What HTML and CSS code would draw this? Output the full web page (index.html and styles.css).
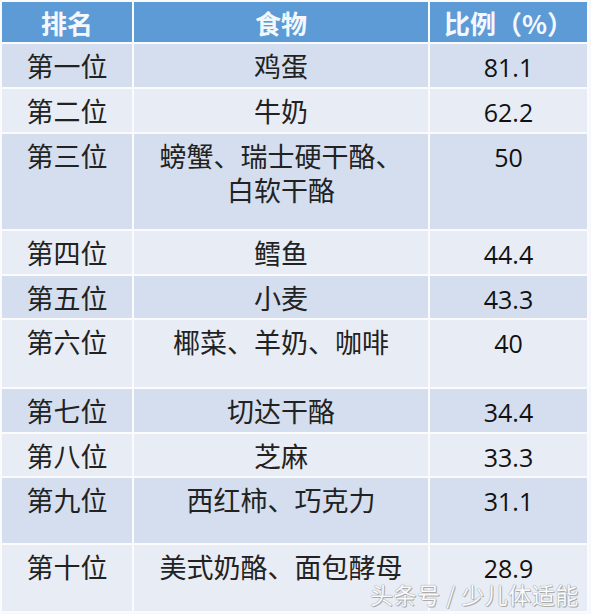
FILE: index.html
```
<!DOCTYPE html>
<html lang="zh-CN">
<head>
<meta charset="utf-8">
<title>食物排名</title>
<link rel="stylesheet" href="styles.css">
</head>
<body>
<div class="page">
  <div class="table">
    <div class="cell hd">排名</div>
    <div class="cell hd">食物</div>
    <div class="cell hd">比例（%）</div>

    <div class="cell dark rank">第一位</div>
    <div class="cell dark food">鸡蛋</div>
    <div class="cell dark num">81.1</div>

    <div class="cell light rank">第二位</div>
    <div class="cell light food">牛奶</div>
    <div class="cell light num">62.2</div>

    <div class="cell dark rank">第三位</div>
    <div class="cell dark food">螃蟹、瑞士硬干酪、<br>白软干酪</div>
    <div class="cell dark num">50</div>

    <div class="cell light rank">第四位</div>
    <div class="cell light food">鳕鱼</div>
    <div class="cell light num">44.4</div>

    <div class="cell dark rank">第五位</div>
    <div class="cell dark food">小麦</div>
    <div class="cell dark num">43.3</div>

    <div class="cell light rank">第六位</div>
    <div class="cell light food">椰菜、羊奶、咖啡</div>
    <div class="cell light num">40</div>

    <div class="cell dark rank">第七位</div>
    <div class="cell dark food">切达干酪</div>
    <div class="cell dark num">34.4</div>

    <div class="cell light rank">第八位</div>
    <div class="cell light food">芝麻</div>
    <div class="cell light num">33.3</div>

    <div class="cell dark rank">第九位</div>
    <div class="cell dark food">西红柿、巧克力</div>
    <div class="cell dark num">31.1</div>

    <div class="cell light rank">第十位</div>
    <div class="cell light food">美式奶酪、面包酵母</div>
    <div class="cell light num">28.9</div>
  </div>
  <div class="watermark">头条号 / 少儿体适能</div>
</div>
</body>
</html>
```
FILE: styles.css
```
html, body {
  margin: 0;
  padding: 0;
  background: #ffffff;
}

.page {
  position: relative;
  width: 591px;
  height: 614px;
  overflow: hidden;
  background: #f7f8fb;
}

.table {
  display: grid;
  grid-template-columns: 130px 294px 157px;
  grid-template-rows: 40px 43px 43px 95px 43px 42px 67px 43px 42px 65px 66px;
  gap: 2px;
  padding: 2px;
  background: #fbfbfd;
  width: 585px;
}

.cell {
  text-align: center;
  font-family: "Noto Sans CJK SC", sans-serif;
  color: #1c1c1c;
  font-size: 26px;
  line-height: 34px;
  padding-top: 5px;
  box-sizing: border-box;
}

.hd {
  background: #5d9bd7;
  color: #f4f8fd;
  font-weight: 700;
  font-size: 26px;
  line-height: 38px;
  padding-top: 2px;
}

.dark {
  background: #d4deee;
}

.light {
  background: #e8ecf5;
}

.rank {
  font-size: 27px;
  font-weight: 400;
  color: #222;
}

.food {
  font-size: 27px;
  font-weight: 400;
  color: #222;
}

.num {
  font-family: "Open Sans", "Liberation Sans", sans-serif;
  font-size: 25px;
  line-height: 28px;
  color: #111;
  padding-top: 9px;
}

.watermark {
  position: absolute;
  left: 370px;
  top: 582px;
  font-family: "Noto Sans CJK SC", sans-serif;
  font-size: 23px;
  line-height: 24px;
  color: #fafafa;
  letter-spacing: 0.5px;
  text-shadow: 0 0 1px #9a9a9a, 0 0 1px #9a9a9a, 1px 1px 0 #b0b0b0;
  white-space: nowrap;
}
```
